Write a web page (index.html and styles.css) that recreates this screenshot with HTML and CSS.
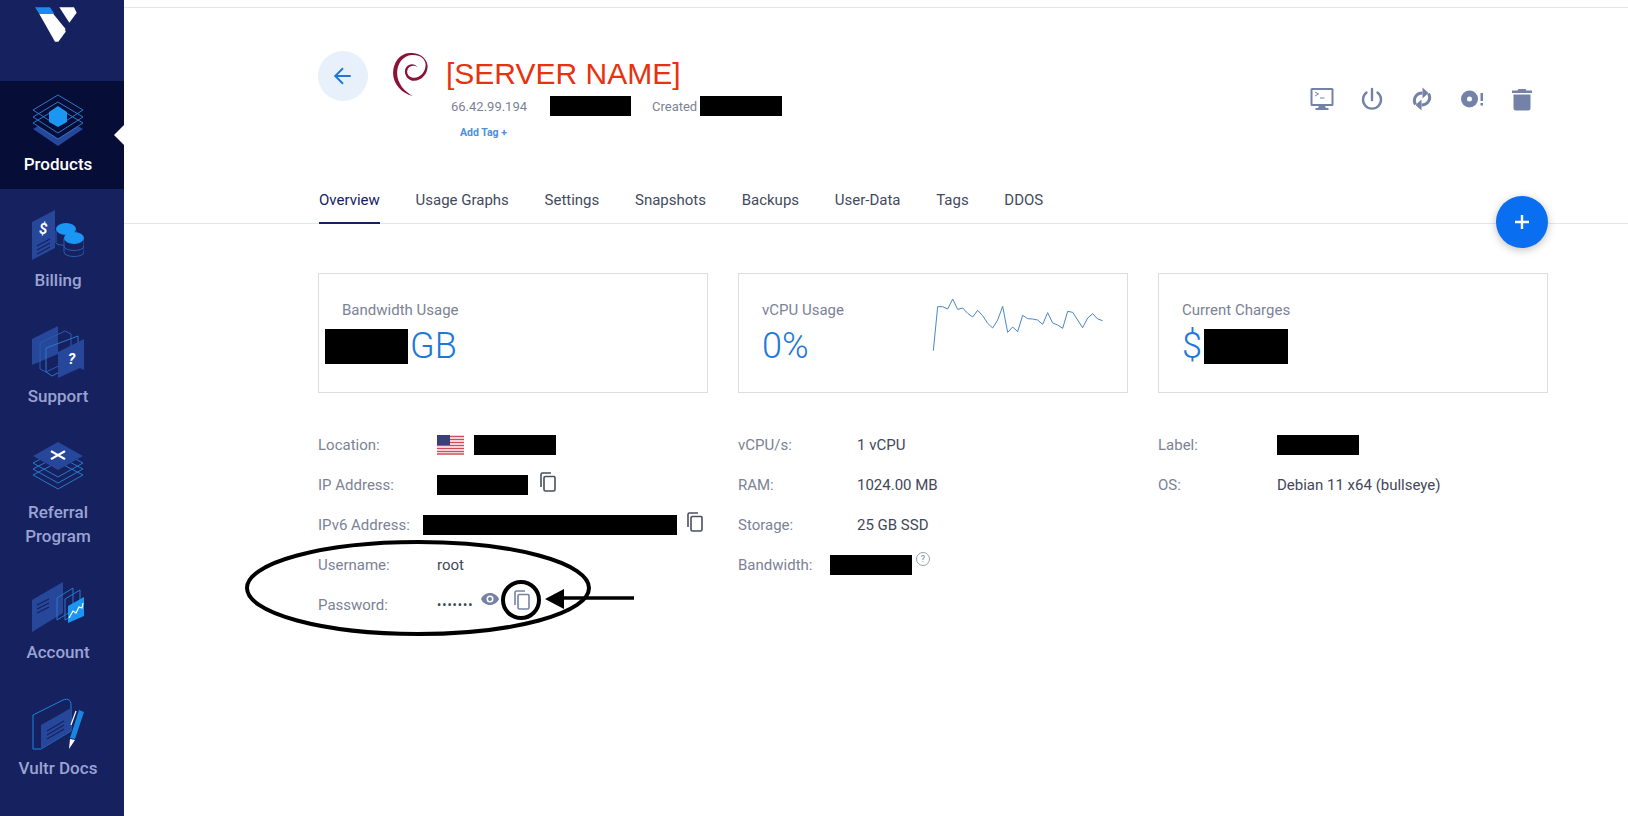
FILE: index.html
```html
<!DOCTYPE html>
<html lang="en">
<head>
  <meta charset="UTF-8">
  <title>Server Information</title>
  <link rel="stylesheet" href="styles.css">
</head>
<body>

  <div class="page">
    <nav class="sidebar">
      <div class="logo">
        <svg width="130" height="60" viewBox="0 0 390 180">
          <polygon points="118,42 160,42 195,85 197,95 175,125 165,125" fill="#fff"/>
          <polygon points="105,22 150,22 163,42 118,42" fill="#1e88ee"/>
          <polygon points="178,22 222,22 230,38 208,68" fill="#fff"/>
        </svg>
      </div>

      <a class="nav-item nav-item-active">
        <svg class="nav-icon" viewBox="0 0 52 52">
          <polygon points="1,35 26,21 51,35 26,52" fill="#27479b"/>
          <g fill="#16215f" stroke="#2a78c8" stroke-width="1">
            <polygon points="1,29 26,14 51,29 26,45" fill="#060d36"/>
            <polygon points="1,23 26,8 51,23 26,39" fill="none"/>
            <polygon points="1,16 26,1 51,16 26,32" fill="none"/>
          </g>
          <polygon points="17,18 26,12 35,18 35,28 26,33 17,28" fill="#1b96f3"/>
        </svg>
        <span>Products</span>
      </a>

      <a class="nav-item">
        <svg class="nav-icon" viewBox="0 0 52 52">
          <polygon points="0,12 23,0 23,38 0,50" fill="#27479b"/>
          <text x="7" y="24" class="icon-glyph">$</text>
          <path d="M5 36l13-7M5 40l13-7M5 44l13-7" stroke="#16215f" stroke-width="1.2"/>
          <path d="M24 21v12c0 3 20 3 20 0V21" fill="#16215f" stroke="#2a5cb0"/>
          <ellipse cx="34" cy="19" rx="10" ry="6" fill="#1b96f3"/>
          <path d="M32 28v14c0 6 20 6 20 0V28" fill="#16215f" stroke="#2a5cb0"/>
          <path d="M32 36c0 6 20 6 20 0" fill="none" stroke="#2a5cb0"/>
          <ellipse cx="42" cy="28" rx="10" ry="6" fill="#1b96f3"/>
        </svg>
        <span>Billing</span>
      </a>

      <a class="nav-item">
        <svg class="nav-icon" viewBox="0 0 52 52">
          <polygon points="0,13 26,0 26,28 0,39" fill="#27479b"/>
          <polygon points="8,17 33,5 39,8 39,34 14,46 8,43" fill="none" stroke="#2a5cb0"/>
          <polygon points="14,22 46,10 46,36 20,50 14,46" fill="none" stroke="#2a78c8"/>
          <polygon points="26,26 52,13 52,44 48,42 26,52" fill="#27479b"/>
          <text x="36" y="38" class="icon-glyph">?</text>
        </svg>
        <span>Support</span>
      </a>

      <a class="nav-item nav-item-tall">
        <svg class="nav-icon" viewBox="0 0 52 48">
          <g fill="none" stroke="#2a78c8" stroke-width="1">
            <polygon points="1,33 26,20 51,33 26,47"/>
            <polygon points="1,27 26,14 51,27 26,41"/>
            <polygon points="1,21 26,8 51,21 26,35"/>
          </g>
          <polygon points="1,14 26,0 51,14 26,28" fill="#27479b"/>
          <path d="M19 9l14 9M33 9l-14 9" transform="translate(0 1) scale(1 .9)" stroke="#fff" stroke-width="2.4" fill="none"/>
        </svg>
        <span>Referral<br>Program</span>
      </a>

      <a class="nav-item">
        <svg class="nav-icon" viewBox="0 0 52 52">
          <polygon points="0,18 31,0 31,31 0,50" fill="#27479b"/>
          <path d="M5 23l12-6M5 27l12-6M5 31l12-6" stroke="#16215f" stroke-width="1.2"/>
          <polygon points="25,16 41,6 41,28 25,38" fill="none" stroke="#2a78c8"/>
          <polygon points="33,17 48,8 48,30 33,38" fill="none" stroke="#2a78c8"/>
          <polygon points="36,24 52,15 52,34 36,41" fill="#1b96f3"/>
          <path d="M37 36l4-7 3 2 3-6 3 1 1-5" fill="none" stroke="#fff" stroke-width="1.2"/>
        </svg>
        <span>Account</span>
      </a>

      <a class="nav-item">
        <svg class="nav-icon" viewBox="0 0 52 52">
          <path d="M1 17L31 2c5-2 8 0 8 5v26L9 51H1z" fill="none" stroke="#1b86e0" stroke-width="1"/>
          <polygon points="9,27 39,10 39,33 9,51" fill="#27479b"/>
          <path d="M15 33l17-10M15 37l17-10M15 41l17-10" stroke="#16215f" stroke-width="1.2"/>
          <path d="M39 27l5-14" stroke="#fff" stroke-width="1.2"/>
          <polygon points="47,12 52,14 43,41 38,40" fill="#1b86e0"/>
          <polygon points="38,41 43,42 37,51" fill="#fff"/>
        </svg>
        <span>Vultr Docs</span>
      </a>
    </nav>

    <main class="content">
      <header class="server-head">
        <div class="server-info">
          <button class="back-btn">
            <svg width="22" height="22" viewBox="0 0 20 20"><path d="M17 10H3.500M10 3l-7 7 7 7" fill="none" stroke="#1e78d8" stroke-width="1.800"/></svg>
          </button>
          <svg class="os-logo" width="35" height="43" viewBox="0 0 103 127">
            <path fill="#8c1238" d="M48 0C20 2 0 28 0 60c0 30 25 60 58 67C35 115 12 90 12 60 12 30 30 8 55 6c25-2 43 12 41 32-1 22-21 40-41 34-13-4-17-17-10-27 5-7 17-10 27-3-7-12-27-12-35 3-7 15 5 37 25 37 23 0 41-22 40-44C100 15 78-2 48 0z"/>
          </svg>
          <div class="server-text">
            <h1 class="server-name">[SERVER NAME]</h1>
            <div class="server-meta">
              <span class="meta-ip">66.42.99.194</span>
              <span class="redact redact-meta"></span>
              <span class="meta-created">Created</span>
              <span class="redact redact-date"></span>
            </div>
            <a class="add-tag">Add Tag +</a>
          </div>
        </div>

        <div class="server-actions">
          <svg class="action" viewBox="0 0 24 24">
            <path fill-rule="evenodd" d="M2 1h20a1.500 1.500 0 0 1 1.500 1.500v15a1.500 1.500 0 0 1-1.500 1.500h-7l1 2h2.500v2H5.500v-2H8l1-2H2a1.500 1.500 0 0 1-1.500-1.500v-15A1.500 1.500 0 0 1 2 1zM2.500 3v14h19V3z" />
            <path d="M5 5l3.500 2L5 9M10 11h4.500" fill="none" stroke-width="1"/>
          </svg>
          <svg class="action" viewBox="0 0 24 24">
            <path d="M12 2v11M6.500 5.500a9 9 0 1 0 11 0" fill="none" stroke-width="2.400" stroke-linecap="round"/>
          </svg>
          <svg class="action" viewBox="0 0 24 24">
            <path d="M5.500 17.500C2.500 12 6 6 12.500 6M18.500 6.500C21.500 12 18 18 11.500 18" fill="none" stroke-width="3"/>
            <path d="M12.500 0.500L18.500 6l-6 5.500zM11.500 12.500L5.500 18l6 5.500z"/>
          </svg>
          <svg class="action" viewBox="0 0 24 24">
            <path fill-rule="evenodd" d="M9.500 3.500a8.500 8.500 0 1 1 0 17 8.500 8.500 0 0 1 0-17zm0 6a2.500 2.500 0 1 0 0 5 2.500 2.500 0 0 0 0-5z"/>
            <path d="M20.500 6h2.500v8h-2.500zM20.500 16h2.500v2.500h-2.500z"/>
          </svg>
          <svg class="action" viewBox="0 0 24 24">
            <path d="M8.500 2h7l1 1.500H22V6H2V3.500h5.500zM3.500 7.500h17V21a2.500 2.500 0 0 1-2.500 2.500H6A2.500 2.500 0 0 1 3.500 21z"/>
          </svg>
        </div>
      </header>

      <div class="tabs">
        <a class="tab tab-active">Overview</a>
        <a class="tab">Usage Graphs</a>
        <a class="tab">Settings</a>
        <a class="tab">Snapshots</a>
        <a class="tab">Backups</a>
        <a class="tab">User-Data</a>
        <a class="tab">Tags</a>
        <a class="tab">DDOS</a>
        <button class="fab">
          <svg width="18" height="18" viewBox="0 0 18 18"><path d="M9 2v14M2 9h14" stroke="#fff" stroke-width="2.400"/></svg>
        </button>
      </div>

      <section class="cards">
        <div class="card">
          <div class="card-text">
            <div class="card-label">Bandwidth Usage</div>
            <div class="card-value card-value-redacted"><span class="redact redact-value"></span>GB</div>
          </div>
        </div>
        <div class="card">
          <div class="card-text card-text-short">
            <div class="card-label">vCPU Usage</div>
            <div class="card-value">0%</div>
          </div>
          <svg class="sparkline" width="220" height="90" viewBox="0 0 660 270">
            <polyline fill="none" stroke="#4a86c8" stroke-width="3" points="100,212 113,80 128,80 143,87 158,57 173,88 188,84 203,100 218,111 233,91 248,107 263,130 278,144 293,120 308,79 323,157 338,141 353,155 368,106 383,116 398,117 413,120 428,133 443,98 458,129 473,135 488,145 503,94 518,97 533,120 548,143 563,114 578,101 593,117 608,122"/>
          </svg>
        </div>
        <div class="card">
          <div class="card-text">
            <div class="card-label">Current Charges</div>
            <div class="card-value">$<span class="redact redact-charge"></span></div>
          </div>
        </div>
      </section>

      <section class="details">
        <div class="detail-col">
          <div class="row">
            <span class="row-label">Location:</span>
            <svg class="flag" width="27" height="20" viewBox="0 0 27 20">
              <rect width="27" height="20" fill="#fff"/>
              <path d="M0 1.500h27M0 4.500h27M0 7.500h27M0 10.500h27M0 13.500h27M0 16.500h27M0 19h27" stroke="#cf4a5c" stroke-width="1.500"/>
              <rect width="13" height="10" fill="#3a3f78"/>
            </svg>
            <span class="redact redact-loc"></span>
          </div>
          <div class="row">
            <span class="row-label">IP Address:</span>
            <span class="redact redact-ip"></span>
            <svg class="copy copy-dark" viewBox="0 0 16 20"><path d="M11 1H2.500A1.500 1.500 0 0 0 1 2.500V15M5.500 4.500h8.500A1.500 1.500 0 0 1 15 6v11.500a1.500 1.500 0 0 1-1.500 1.500h-8A1.500 1.500 0 0 1 4 17.500V6a1.500 1.500 0 0 1 1.500-1.500z"/></svg>
          </div>
          <div class="row">
            <span class="row-label row-label-short">IPv6 Address:</span>
            <span class="redact redact-ip6"></span>
            <svg class="copy copy-dark copy-tight" viewBox="0 0 16 20"><path d="M11 1H2.500A1.500 1.500 0 0 0 1 2.500V15M5.500 4.500h8.500A1.500 1.500 0 0 1 15 6v11.500a1.500 1.500 0 0 1-1.500 1.500h-8A1.500 1.500 0 0 1 4 17.500V6a1.500 1.500 0 0 1 1.500-1.500z"/></svg>
          </div>
          <div class="row">
            <span class="row-label">Username:</span>
            <span class="row-value">root</span>
          </div>
          <div class="row">
            <span class="row-label">Password:</span>
            <span class="row-value password">•••••••</span>
            <svg class="eye" width="18" height="12" viewBox="0 0 18 12">
              <path fill-rule="evenodd" fill="#7582a8" d="M9 0c4 0 7.500 2.500 9 6-1.500 3.500-5 6-9 6s-7.500-2.500-9-6c1.500-3.500 5-6 9-6zm0 2.500a3.500 3.500 0 1 0 0 7 3.500 3.500 0 0 0 0-7zM9 4a2 2 0 1 1 0 4 2 2 0 0 1 0-4z"/>
            </svg>
            <svg class="copy copy-blue" viewBox="0 0 16 20"><path d="M11 1H2.500A1.500 1.500 0 0 0 1 2.500V15M5.500 4.500h8.500A1.500 1.500 0 0 1 15 6v11.500a1.500 1.500 0 0 1-1.500 1.500h-8A1.500 1.500 0 0 1 4 17.500V6a1.500 1.500 0 0 1 1.500-1.500z"/></svg>
          </div>
        </div>

        <div class="detail-col">
          <div class="row"><span class="row-label">vCPU/s:</span><span class="row-value">1 vCPU</span></div>
          <div class="row"><span class="row-label">RAM:</span><span class="row-value">1024.00 MB</span></div>
          <div class="row"><span class="row-label">Storage:</span><span class="row-value">25 GB SSD</span></div>
          <div class="row">
            <span class="row-label row-label-tiny">Bandwidth:</span>
            <span class="redact redact-loc"></span>
            <span class="help">?</span>
          </div>
        </div>

        <div class="detail-col">
          <div class="row"><span class="row-label">Label:</span><span class="redact redact-loc"></span></div>
          <div class="row"><span class="row-label">OS:</span><span class="row-value">Debian 11 x64 (bullseye)</span></div>
        </div>
      </section>
    </main>
  </div>

  <!-- hand drawn markup on top of the screenshot -->
  <svg class="markup" width="1628" height="816" viewBox="0 0 1628 816">
    <ellipse cx="418" cy="588" rx="171" ry="46" fill="none" stroke="#000" stroke-width="4"/>
    <circle cx="521" cy="600" r="18" fill="none" stroke="#000" stroke-width="4"/>
    <path d="M634 598H560" stroke="#000" stroke-width="3.500"/>
    <polygon points="545,599 564,589 564,609" fill="#000"/>
  </svg>

</body>
</html>
```

FILE: styles.css
```css
* {
  box-sizing: border-box;
}
body {
  margin: 0;
  font-family: Roboto, "Liberation Sans", sans-serif;
  background-color: #fff;
  color: #424859;
  overflow: hidden;
}
.page {
  display: flex;
  height: 816px;
  position: relative;
}

/* sidebar */
.sidebar {
  width: 124px;
  flex-shrink: 0;
  background-color: #16215f;
  color: #9aa3d3;
  font-size: 17px;
  font-weight: 500;
  line-height: 24px;
  text-align: center;
}
.logo {
  height: 81px;
  overflow: hidden;
}
.logo svg {
  display: block;
}
.nav-item {
  display: block;
  height: 108px;
  margin-bottom: 8px;
  padding: 13px 8px 0 0;
  position: relative;
}
.nav-item-tall {
  height: 132px;
}
.nav-item span {
  display: block;
  margin-top: 6px;
}
.nav-icon {
  display: block;
  width: 52px;
  height: 52px;
  margin: 0 auto;
}
.nav-item-tall .nav-icon {
  height: 48px;
}
.nav-item-tall span {
  margin-top: 10px;
}
.nav-item-active {
  background-color: #060d36;
  color: #fff;
  padding-top: 13px;
}
.nav-item-active::after {
  content: "";
  position: absolute;
  right: 0;
  top: 44px;
  border-style: solid;
  border-width: 10px 10px 10px 0;
  border-color: transparent #fff transparent transparent;
}
.icon-glyph {
  font-family: Roboto, sans-serif;
  font-size: 15px;
  font-weight: 700;
  font-style: italic;
  fill: #fff;
}

/* main */
.content {
  flex: 1;
  min-width: 0;
  margin-top: 7px;
  border-top: 1px solid #e4e6ee;
  position: relative;
}
.server-head {
  display: flex;
  justify-content: space-between;
  height: 150px;
  padding: 43px 80px 0 194px;
}
.server-info {
  display: flex;
  align-items: flex-start;
}
.back-btn {
  width: 50px;
  height: 50px;
  border: 0;
  border-radius: 50%;
  background-color: #e8f0fc;
  padding: 0;
  display: flex;
  align-items: center;
  justify-content: center;
}
.os-logo {
  margin: 2px 0 0 25px;
}
.server-text {
  margin-left: 18px;
}
.server-name {
  margin: 4px 0 0;
  font-family: "Liberation Sans", Arial, sans-serif;
  font-size: 30px;
  font-weight: 400;
  line-height: 38px;
  color: #e8320f;
}
.server-meta {
  display: flex;
  align-items: center;
  height: 20px;
  margin: 3px 0 0 5px;
  font-size: 13px;
  color: #7c8294;
}
.meta-ip {
  width: 99px;
}
.meta-created {
  margin: 0 3px 0 21px;
}
.add-tag {
  display: block;
  margin: 10px 0 0 14px;
  font-size: 10.500px;
  font-weight: 700;
  line-height: 14px;
  color: #4a8fdc;
}
.server-actions {
  display: flex;
  gap: 26px;
  margin-top: 36px;
  margin-right: 14px;
}
.action {
  width: 24px;
  height: 24px;
  fill: #7582a8;
  stroke: #7582a8;
  stroke-width: 0;
}

.redact {
  display: inline-block;
  background-color: #000;
  flex-shrink: 0;
}
.redact-meta {
  width: 81px;
  height: 20px;
}
.redact-date {
  width: 82px;
  height: 20px;
}

/* tabs */
.tabs {
  display: flex;
  gap: 35.700px;
  height: 66px;
  padding: 0 0 0 195px;
  border-bottom: 1px solid #e4e6ee;
  position: relative;
}
.tab {
  height: 66px;
  padding-top: 32px;
  font-size: 15px;
  line-height: 20px;
  color: #434a5e;
}
.tab-active {
  color: #16215f;
  border-bottom: 2px solid #16215f;
  position: relative;
}
.fab {
  position: absolute;
  top: 38px;
  right: 80px;
  width: 52px;
  height: 52px;
  border: 0;
  border-radius: 50%;
  background-color: #0a6ef0;
  box-shadow: 0 2px 8px rgba(0, 0, 0, 0.25);
  display: flex;
  align-items: center;
  justify-content: center;
}

/* cards */
.cards {
  display: grid;
  grid-template-columns: repeat(3, 390px);
  gap: 30px;
  padding: 49px 0 0 194px;
}
.card {
  display: flex;
  height: 120px;
  border: 1px solid #dcdde2;
  padding-left: 23px;
}
.card-text {
  margin-top: 26px;
}
.card-text-short {
  width: 138px;
}
.card-label {
  font-size: 15px;
  line-height: 20px;
  color: #7c8294;
}
.card-value {
  display: flex;
  align-items: center;
  height: 44px;
  margin-top: 4px;
  font-size: 36px;
  font-weight: 300;
  color: #1e78d8;
}
.card-value-redacted {
  margin-left: -17px;
}
.redact-value {
  width: 83px;
  height: 35px;
  margin-right: 2px;
}
.redact-charge {
  width: 84px;
  height: 35px;
  margin-left: 2px;
}
.sparkline {
  margin-top: 6px;
  flex-shrink: 0;
}

/* details */
.details {
  display: grid;
  grid-template-columns: repeat(3, 390px);
  gap: 30px;
  padding: 32px 0 0 194px;
}
.row {
  display: flex;
  align-items: center;
  height: 40px;
  font-size: 15px;
}
.row-label {
  width: 119px;
  flex-shrink: 0;
  color: #7c8294;
}
.row-label-short {
  width: 105px;
}
.row-label-tiny {
  width: 92px;
}
.row-value {
  color: #424859;
}
.password {
  letter-spacing: 1px;
  font-size: 12px;
  font-weight: 500;
}
.flag {
  margin-right: 10px;
  flex-shrink: 0;
}
.redact-loc {
  width: 82px;
  height: 20px;
}
.redact-ip {
  width: 91px;
  height: 20px;
}
.redact-ip6 {
  width: 254px;
  height: 20px;
}
.copy {
  width: 16px;
  height: 20px;
  margin-left: 12px;
  margin-top: -6px;
  fill: none;
  stroke-width: 1.6;
}
.copy-tight {
  margin-left: 10px;
}
.copy-dark {
  stroke: #4a4f5e;
}
.copy-blue {
  stroke: #7582a8;
  margin-left: 15px;
  margin-top: -10px;
}
.eye {
  margin-left: 8px;
  margin-top: -13px;
}
.help {
  width: 14px;
  height: 14px;
  margin: -12px 0 0 4px;
  border: 1px solid #9aa0b2;
  border-radius: 50%;
  font-size: 9px;
  line-height: 12px;
  text-align: center;
  color: #7c8294;
}

/* markup drawn over the page */
.markup {
  position: absolute;
  top: 0;
  left: 0;
  pointer-events: none;
}
```
